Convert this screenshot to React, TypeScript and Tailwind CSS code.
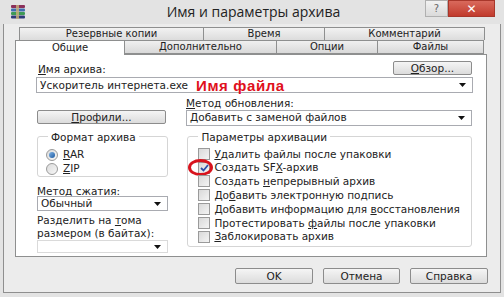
import React from 'react';

const Combo = ({ children, className = '' }: { children?: React.ReactNode; className?: string }) => (
  <div className={`flex items-center justify-between bg-white border border-[#a9abb1] pl-[3px] pr-[6px] ${className}`}>
    <div className="flex items-center gap-[8px] leading-none">{children}</div>
    <svg width="7" height="4" viewBox="0 0 7 4"><path d="M0 0h7L3.5 4z" fill="#111" /></svg>
  </div>
);

const Btn = ({ children, className = '' }: { children: React.ReactNode; className?: string }) => (
  <div className={`flex items-center justify-center rounded-[2px] border border-[#8c8c8c] bg-gradient-to-b from-[#f5f5f5] to-[#dcdcdc] leading-none ${className}`}>
    {children}
  </div>
);

const Check = ({ checked = false }: { checked?: boolean }) => (
  <div className="w-[12px] h-[12px] shrink-0 border border-[#9a9a9a] bg-gradient-to-br from-[#d9d9d9] to-[#f4f4f4] flex items-center justify-center">
    {checked && (
      <svg width="9" height="8" viewBox="0 0 9 8"><path d="M1 4l2.5 2.5L8 1" stroke="#2b4fa8" strokeWidth="1.8" fill="none" /></svg>
    )}
  </div>
);

const Radio = ({ checked = false }: { checked?: boolean }) => (
  <div className="w-[12px] h-[12px] rounded-full border border-[#9a9a9a] bg-gradient-to-br from-[#dcdcdc] to-[#f6f6f6] flex items-center justify-center">
    {checked && <div className="w-[6px] h-[6px] rounded-full bg-gradient-to-br from-[#7fb4e6] to-[#1d5aa0]" />}
  </div>
);

const options: React.ReactNode[] = [
  <><u>У</u>далить файлы после упаковки</>,
  <>Создать SF<u>X</u>-архив</>,
  <>Создать <u>н</u>епрерывный архив</>,
  <>До<u>б</u>авить электронную подпись</>,
  <>Добавить информацию для <u>в</u>осстановления</>,
  <>Протестировать <u>ф</u>айлы после упаковки</>,
  <><u>З</u>аблокировать архив</>,
];

const WinRarIcon = () => (
  <svg width="16" height="14" viewBox="0 0 16 14">
    <rect x="1" y="0" width="14" height="3" rx="1" fill="#8b2f5a" />
    <rect x="1" y="3.5" width="14" height="3" rx="1" fill="#3f6fb0" />
    <rect x="1" y="7" width="14" height="3" rx="1" fill="#3e9a56" />
    <rect x="1" y="10.5" width="14" height="3" rx="1" fill="#2e3b7a" />
    <rect x="6" y="0" width="3" height="14" fill="#c9b27a" opacity="0.8" />
  </svg>
);

export default function App() {
  return (
    <div className="w-[504px] h-[297px] bg-[#e3e3e3] flex flex-col font-['DejaVu_Sans',sans-serif] text-[10.5px] text-[#222] overflow-hidden">
      {/* Title bar */}
      <div className="h-[24px] flex items-start shrink-0">
        <div className="pl-[10px] pt-[5px]"><WinRarIcon /></div>
        <div className="flex-1 text-center pt-[3px] font-['Open_Sans',sans-serif] text-[14px] leading-[18px] text-[#222] pl-[56px]">Имя и параметры архива</div>
        <div className="flex mr-[9px]">
          <div className="w-[23px] h-[17px] border border-[#b0b0b0] bg-gradient-to-b from-[#f2f2f2] to-[#dadada] flex items-center justify-center text-[10px] text-[#666]">?</div>
          <div className="w-[47px] h-[17px] bg-gradient-to-b from-[#d9695c] to-[#c13a2c] border border-[#a8372b] flex items-center justify-center text-white text-[12px] font-bold">✕</div>
        </div>
      </div>

      {/* Body */}
      <div className="flex-1 mx-[3px] mb-[4px] border-l border-r border-b border-[#8f8f8f] bg-[#ececec] px-[11px] pt-[3px] flex flex-col">
        {/* Tabs back row */}
        <div className="flex ml-[4px] h-[13px] text-[10px]">
          {['Резервные копии', 'Время', 'Комментарий'].map((t, i) => (
            <div key={t} className={`${['w-[185px]', 'w-[122px]', 'w-[161px]'][i]} border border-b-0 border-[#8e8f8f] -ml-px first:ml-0 bg-gradient-to-b from-[#f2f2f2] to-[#dcdcdc] flex items-center justify-center leading-none`}>{t}</div>
          ))}
        </div>
        {/* Tabs front row */}
        <div className="flex h-[14px] text-[10px] relative z-10">
          <div className="w-[110px] h-[15px] border border-b-0 border-[#8e8f8f] bg-white flex items-center justify-center leading-none">Общие</div>
          {[['Дополнительно', 'w-[153px]'], ['Опции', 'w-[102px]'], ['Файлы', 'w-[107px]']].map(([t, w]) => (
            <div key={t} className={`${w} border border-[#8e8f8f] -ml-px bg-gradient-to-b from-[#f0f0f0] to-[#d9d9d9] flex items-center justify-center leading-none`}>{t}</div>
          ))}
        </div>

        {/* Tab page */}
        <div className="w-[472px] h-[203px] bg-white border border-[#8e8f8f] pl-[21px] pr-[14px] pt-[7px] flex flex-col">
          <div className="flex items-end justify-between h-[13px]">
            <span className="leading-none pb-[1px] pl-[1px]"><u>И</u>мя архива:</span>
            <Btn className="w-[79px] h-[14px]"><u>О</u>бзор...</Btn>
          </div>
          <Combo className="mt-[2px] h-[16px] w-[437px] -ml-px">
            <span>Ускоритель интернета.exe</span>
            <span className="text-[#e0101c] font-bold text-[15px] tracking-[0.6px] font-['Liberation_Sans',sans-serif]">Имя файла</span>
          </Combo>

          {/* Profiles / update method */}
          <div className="flex mt-[5px] gap-[19px]">
            <div className="w-[132px] flex flex-col">
              <Btn className="mt-[12px] w-[129px] h-[14px]"><u>П</u>рофили...</Btn>
            </div>
            <div className="w-[286px] flex flex-col">
              <span className="leading-none"><u>М</u>етод обновления:</span>
              <Combo className="mt-[1px] h-[16px] w-[286px]">Добавить с заменой файлов</Combo>
            </div>
          </div>

          {/* Group boxes */}
          <div className="flex mt-[6px] gap-[19px]">
            <div className="w-[132px] flex flex-col">
              <fieldset className="border border-[#d5d5d5] rounded-[3px] h-[45px] px-[8px]">
                <legend className="px-[3px] ml-[2px] leading-none">Формат архива</legend>
                <div className="flex items-center gap-[5px] mt-[6px] h-[14px]"><Radio checked /><span><u>R</u>AR</span></div>
                <div className="flex items-center gap-[5px] mt-[0px] h-[14px]"><Radio /><span><u>Z</u>IP</span></div>
              </fieldset>
              <span className="mt-[9px] leading-none">Метод <u>с</u>жатия:</span>
              <Combo className="mt-[0px] h-[15px] w-[131px]">Обычный</Combo>
              <span className="mt-[3px] leading-[13px]">Разделить на <u>т</u>ома<br />размером (в байтах):</span>
              <Combo className="mt-[0px] h-[13px] w-[131px] border-[#dadada]" />
            </div>

            <div className="w-[286px] flex flex-col">
              <fieldset className="border border-[#d5d5d5] rounded-[3px] h-[115px] pl-[10px] pr-[6px]">
                <legend className="px-[3px] leading-none">Параметры архивации</legend>
                <div className="flex flex-col mt-[5px]">
                  {options.map((o, i) => (
                    <div key={i} className="relative flex items-center gap-[4px] h-[13.8px]">
                      <Check checked={i === 1} />
                      <span className="leading-none whitespace-nowrap">{o}</span>
                      {i === 1 && (
                        <div className="absolute left-[-10px] top-[-2px] w-[25px] h-[17px] rounded-[50%] border-[3px] border-[#d8141e]" />
                      )}
                    </div>
                  ))}
                </div>
              </fieldset>
            </div>
          </div>
        </div>

        {/* Bottom buttons */}
        <div className="flex justify-end gap-[10px] mt-[11px] pr-[1px]">
          <Btn className="w-[78px] h-[16px] border-[#3c8fd6] text-[10.5px]">OK</Btn>
          <Btn className="w-[77px] h-[16px] text-[10.5px]">Отмена</Btn>
          <Btn className="w-[78px] h-[16px] text-[10.5px]">Справка</Btn>
        </div>
      </div>
    </div>
  );
}
